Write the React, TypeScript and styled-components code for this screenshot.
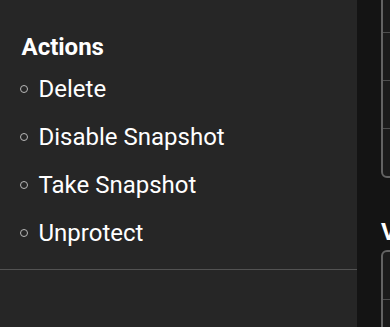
import React from "react";
import styled, { createGlobalStyle } from "styled-components";

const Global = createGlobalStyle`
  html, body { margin: 0; padding: 0; background: #141414; overflow: hidden; }
  #root { width: 390px; height: 327px; overflow: hidden; }
  * { box-sizing: border-box; }
`;

const Page = styled.div`
  display: flex;
  width: 390px;
  height: 327px;
  font-family: Roboto, "Liberation Sans", sans-serif;
  color: #ffffff;
`;

const Sidebar = styled.aside`
  width: 357px;
  flex: none;
  background: #262626;
  display: flex;
  flex-direction: column;
  padding-top: 29px;
`;

const SectionTitle = styled.h2`
  margin: 0;
  padding: 0 20px 0 21.5px;
  font-size: 24px;
  font-weight: 700;
  line-height: 36px;
  color: #ffffff;
`;

const ActionList = styled.ul`
  list-style: none;
  margin: 0;
  padding: 0 20px 0 19.5px;
`;

const ActionItem = styled.li`
  display: flex;
  align-items: center;
  gap: 10.5px;
  height: 48px;
  font-size: 24px;
  line-height: 48px;
  color: #ffffff;
`;

const Bullet = styled.span`
  width: 8.5px;
  height: 8.5px;
  border: 1.5px solid #b8b8b8;
  border-radius: 50%;
  flex: none;
`;

const Divider = styled.hr`
  margin: 12px 0 0;
  border: none;
  border-top: 1px solid #525252;
  height: 0;
`;

const Main = styled.main`
  flex: 1;
  min-width: 0;
  background: #141414;
  padding-left: 24px;
  overflow: hidden;
`;

const Card = styled.div<{ $offset?: number }>`
  width: 300px;
  margin-top: ${(p) => p.$offset ?? 0}px;
  border: 2px solid #636363;
  border-radius: 6px;
  background: #1b1b1b;
`;

const CardRow = styled.div`
  height: 48px;
  border-bottom: 1px solid #4e4e4e;
  &:last-child {
    height: 47px;
    border-bottom: none;
  }
`;

const MainTitle = styled.h2`
  margin: 36px 0 0;
  font-size: 24px;
  font-weight: 700;
  line-height: 36px;
  white-space: nowrap;
  color: #ffffff;
`;

export default function App() {
  const actions = ["Delete", "Disable Snapshot", "Take Snapshot", "Unprotect"];
  return (
    <>
      <Global />
      <Page>
        <Sidebar>
          <SectionTitle>Actions</SectionTitle>
          <ActionList>
            {actions.map((a) => (
              <ActionItem key={a}>
                <Bullet />
                {a}
              </ActionItem>
            ))}
          </ActionList>
          <Divider />
        </Sidebar>
        <Main>
          <Card $offset={-17}>
            <CardRow />
            <CardRow />
            <CardRow />
            <CardRow />
          </Card>
          <MainTitle>Volumes</MainTitle>
          <Card>
            <CardRow />
            <CardRow />
          </Card>
        </Main>
      </Page>
    </>
  );
}
